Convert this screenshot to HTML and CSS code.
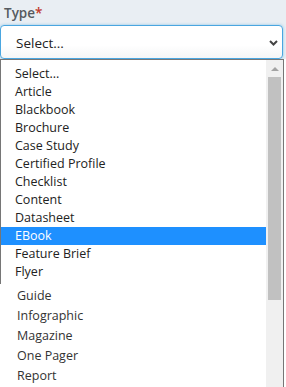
FILE: index.html
```html
<!DOCTYPE html>
<html>
<head>
<meta charset="utf-8">
<link rel="stylesheet" href="styles.css">
</head>
<body>
<div class="field">
  <div class="label">Type<span class="req">*</span></div>
  <div class="select">
    <span class="value">Select...</span>
    <svg class="chev" width="9" height="6" viewBox="0 0 9 6"><path d="M1 1 L4.5 4.5 L8 1" fill="none" stroke="#444" stroke-width="2"/></svg>
  </div>
</div>
<div class="popup">
  <div class="lists">
    <ul class="upper">
      <li>Select...</li>
      <li>Article</li>
      <li>Blackbook</li>
      <li>Brochure</li>
      <li>Case Study</li>
      <li>Certified Profile</li>
      <li>Checklist</li>
      <li>Content</li>
      <li>Datasheet</li>
      <li class="active">EBook</li>
      <li>Feature Brief</li>
      <li>Flyer</li>
    </ul>
    <ul class="lower">
      <li>Guide</li>
      <li>Infographic</li>
      <li>Magazine</li>
      <li>One Pager</li>
      <li>Report</li>
    </ul>
  </div>
  <div class="scrollbar">
    <div class="arrow"><svg width="8" height="4" viewBox="0 0 8 4"><path d="M0 4 L4 0 L8 4 Z" fill="#a3a3a3"/></svg></div>
    <div class="thumb"></div>
  </div>
</div>
</body>
</html>
```
FILE: styles.css
```css
html, body {
  margin: 0;
  padding: 0;
  background: #ffffff;
  font-family: "Open Sans", "Noto Sans", sans-serif;
  width: 286px;
  height: 387px;
  overflow: hidden;
}
.field {
  background: #e9eef3;
  padding-top: 3px;
  width: 286px;
}
.label {
  height: 22px;
  padding-left: 4px;
  font-size: 13.5px;
  font-weight: 600;
  color: #555a60;
  line-height: 20px;
}
.req {
  color: #c0392b;
}
.select {
  box-sizing: border-box;
  width: 283px;
  height: 34px;
  border: 1px solid #4aa6e0;
  border-radius: 4px;
  background: linear-gradient(#ffffff 60%, #f4f5f6);
  box-shadow: 0 0 3px rgba(74, 166, 224, 0.6);
  display: flex;
  align-items: center;
  justify-content: space-between;
  padding: 0 4px 0 15px;
}
.value {
  font-size: 13.5px;
  color: #222;
  line-height: 18px;
  padding-top: 1px;
}
.chev {
  display: block;
  margin-top: 1px;
}
.popup {
  box-sizing: border-box;
  width: 284px;
  height: 328px;
  border-top: 1px solid #767676;
  border-right: 1px solid #767676;
  display: flex;
  background: #fff;
}
.lists {
  flex: 1;
  display: flex;
  flex-direction: column;
}
ul {
  list-style: none;
  margin: 0;
  padding: 0;
}
.upper {
  border-left: 1px solid #767676;
  padding: 5px 0 3px 0;
}
.upper li {
  height: 18px;
  line-height: 18px;
  padding-left: 14px;
  font-size: 12.5px;
  color: #222;
}
.upper li.active {
  background: #1e90ff;
  color: #fff;
}
.lower {
  padding-top: 2px;
}
.lower li {
  height: 20px;
  line-height: 20px;
  padding-left: 17px;
  font-size: 12.5px;
  color: #333;
}
.scrollbar {
  width: 17px;
  background: #f0f0f0;
  display: flex;
  flex-direction: column;
  align-items: center;
}
.arrow {
  height: 17px;
  display: flex;
  align-items: center;
  justify-content: center;
  width: 100%;
}
.thumb {
  width: 13px;
  height: 223px;
  background: #c1c1c1;
}
```
